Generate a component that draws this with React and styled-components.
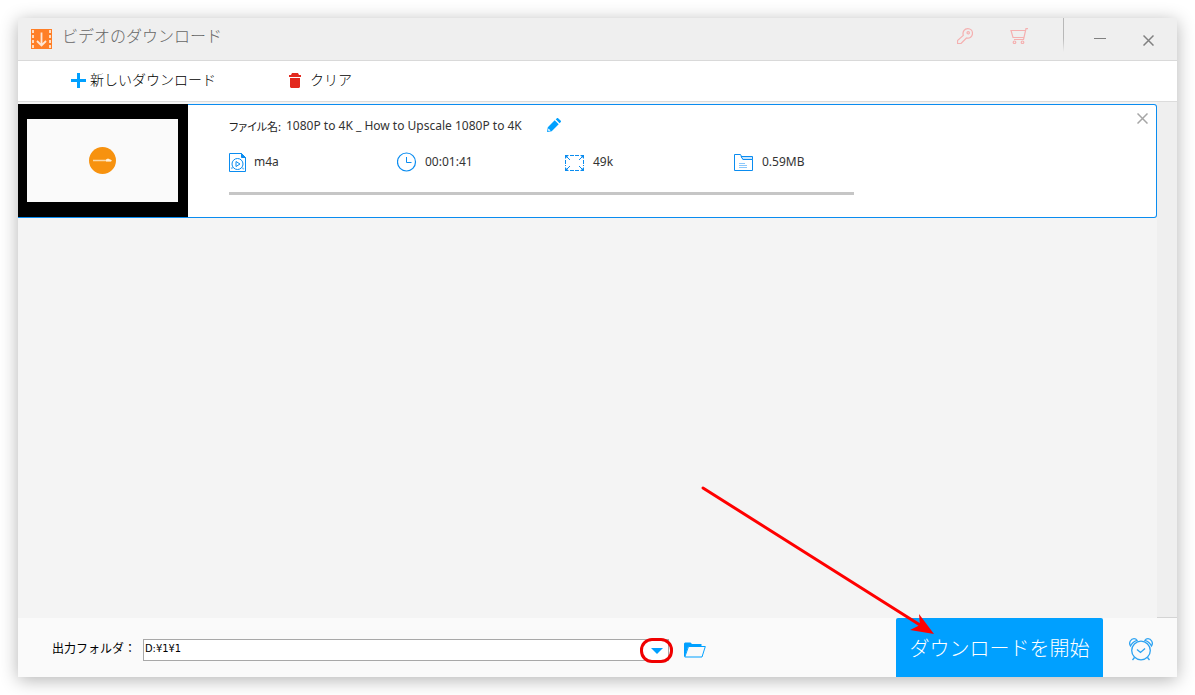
import React from "react";
import styled, { createGlobalStyle } from "styled-components";

const BLUE = "#00a0ff";
const LINE_BLUE = "#0a8cf0";

const GlobalStyle = createGlobalStyle`
  *, *::before, *::after { box-sizing: border-box; }
  body {
    margin: 0;
    background: #fff;
    color: #000;
    font-family: "Noto Sans CJK JP", sans-serif;
    font-size: 12px;
  }
  svg { display: block; flex: none; }
`;

const Page = styled.div`
  display: flex;
  min-height: 100vh;
  padding: 18px;
`;

const Window = styled.main`
  flex: 1;
  min-width: 0;
  display: flex;
  flex-direction: column;
  background: #f4f4f4;
  border-radius: 2px;
  box-shadow: 0 3px 18px rgba(0, 0, 0, 0.3);
`;

const TitleBar = styled.header`
  display: flex;
  height: 43px;
  padding: 0 17px 0 13px;
  background: #efefef;
  border-bottom: 1px solid #d9d9d9;
`;

const Brand = styled.div`
  flex: 1;
  display: flex;
  align-items: center;
  gap: 10px;
`;

const Title = styled.h1`
  margin: 0;
  padding-bottom: 8px;
  font-size: 16px;
  line-height: 20px;
  font-weight: 300;
  color: #666;
`;

const IconButton = styled.button`
  display: flex;
  align-items: center;
  justify-content: center;
  width: ${(p) => p.$width || 24}px;
  height: 24px;
  padding: 0;
  border: 0;
  background: none;
  color: ${(p) => p.$color || "#808080"};
  cursor: pointer;
`;

const HeaderTools = styled.div`
  display: flex;
  align-items: center;
  gap: 24px;
  padding: 0 29px 6px 0;
`;

const Divider = styled.div`
  width: 1px;
  height: 34px;
  margin-right: 24px;
  background: linear-gradient(#b8b8b8 60%, #efefef);
`;

const WindowControls = styled.div`
  display: flex;
  align-items: center;
  gap: 24px;
`;

const Toolbar = styled.nav`
  display: flex;
  align-items: center;
  gap: 73px;
  height: 41px;
  padding: 0 53px 2px;
  background: #fff;
  border-bottom: 1px solid #dcdcdc;
`;

const ToolButton = styled.button`
  display: flex;
  align-items: center;
  gap: ${(p) => p.$gap}px;
  padding: 0;
  border: 0;
  background: none;
  font: 300 14px/20px "Noto Sans CJK JP", sans-serif;
  color: #000;
  cursor: pointer;

  span { padding-bottom: 2px; }
`;

const ListArea = styled.section`
  flex: 1;
  padding: 2px 20px 20px 0;
  background:
    linear-gradient(#d4d4d4, #d4d4d4) right bottom / 20px 1px no-repeat,
    linear-gradient(to left, #efefef 20px, #f4f4f4 20px);
`;

const Card = styled.article`
  display: flex;
  height: 114px;
  background: #fff;
  border: 1px solid ${LINE_BLUE};
  border-left: 0;
  border-radius: 0 3px 3px 0;
`;

const Thumbnail = styled.div`
  flex: none;
  width: 170px;
  margin-top: -1px;
  padding: 15px 10px 15px 9px;
  background: #000;
`;

const Frame = styled.div`
  display: flex;
  align-items: center;
  justify-content: center;
  height: 83px;
  background: #fafafa;
`;

const Details = styled.div`
  flex: 1;
  min-width: 0;
  padding: 11px 0 0 41px;
`;

const NameRow = styled.div`
  display: flex;
  align-items: center;
  height: 20px;
`;

const FileLabel = styled.span`
  width: 57px;
  font-size: 11px;
  line-height: 20px;
  font-weight: 400;
  color: #222;
  font-feature-settings: "palt";
  white-space: nowrap;
`;

const Latin = styled.span`
  font-family: "Noto Sans", sans-serif;
  font-size: 12px;
  line-height: 20px;
  color: #333;
  white-space: nowrap;
`;

const EditButton = styled(IconButton)`
  margin: 0 0 2px 20px;
`;

const Stats = styled.ul`
  display: grid;
  grid-template-columns: repeat(4, 168px);
  margin: 15px 0 19px;
  padding: 0;
  list-style: none;
`;

const Stat = styled.li`
  display: flex;
  align-items: center;
  gap: 8px;
  height: 22px;
`;

const Progress = styled.div`
  max-width: 625px;
  height: 3px;
  background: #c6c6c6;
`;

const RemoveButton = styled(IconButton)`
  margin: 1px 2px 0 0;
`;

const Footer = styled.footer`
  display: flex;
  align-items: center;
  height: 59px;
  padding-left: 34px;
  background: #fafafa;
`;

const FolderLabel = styled.label`
  width: 91px;
  font-size: 12px;
  line-height: 20px;
  font-weight: 400;
  white-space: nowrap;
`;

const SelectWrap = styled.div`
  position: relative;
  flex: 0 1 526px;
  min-width: 120px;
  margin-top: 5px;
`;

const FolderSelect = styled.select`
  appearance: none;
  display: block;
  width: 100%;
  height: 22px;
  padding: 0 28px 3px 1px;
  border: 1px solid #a8a8a8;
  border-radius: 0;
  background: #fff;
  color: #000;
  font: 11px/16px "DejaVu Sans Condensed", "DejaVu Sans", sans-serif;
`;

const DropMark = styled.div`
  position: absolute;
  top: -1px;
  right: -4px;
  display: flex;
  align-items: center;
  justify-content: center;
  width: 33px;
  height: 25px;
  border: 3px solid #f00000;
  border-radius: 12px;
  pointer-events: none;
`;

const FolderButton = styled(IconButton)`
  margin: 4px 0 0 14px;
`;

const StartWrap = styled.div`
  position: relative;
  align-self: stretch;
  margin-left: auto;
`;

const StartButton = styled.button`
  width: 207px;
  height: 100%;
  padding: 0;
  border: 0;
  border-radius: 2px 2px 0 0;
  background: ${BLUE};
  color: #fff;
  font: 300 20px/28px "Noto Sans CJK JP", sans-serif;
  white-space: nowrap;
  cursor: pointer;
`;

const Pointer = styled.svg`
  position: absolute;
  left: -200px;
  top: -137px;
  pointer-events: none;
`;

const AlarmButton = styled(IconButton)`
  margin: 3px 24px 0 26px;
`;

const AppIcon = () => (
  <svg width="21" height="20" viewBox="0 0 21 20" aria-hidden="true">
    <path fill="#ff7f27" d="M0 0h21v20H0z" />
    <path stroke="#ffdcc0" strokeWidth="2" strokeDasharray="3 2" d="M2 1v18M19 1v18" />
    <path fill="none" stroke="#ffe6d4" strokeWidth="1.800" d="M10.500 3.500v13M6 12l4.500 4.500L15 12" />
  </svg>
);

const KeyIcon = () => (
  <svg width="16" height="16" viewBox="0 0 16 16" fill="none" stroke="currentColor" strokeWidth="1.200" aria-hidden="true">
    <path d="M.5 15.500v-3L6.300 7.400C5.200 3.700 7.500.6 10.800.6c2.700 0 4.700 2 4.700 4.700 0 3.300-3 5.400-6 4.700L4 15.500z" />
    <circle cx="11.200" cy="4.800" r="1.200" />
  </svg>
);

const CartIcon = () => (
  <svg width="18" height="16" viewBox="0 0 18 16" fill="none" stroke="currentColor" strokeWidth="1.200" aria-hidden="true">
    <path d="M18 .6h-2L14 9.500H3L1 2.500h14.400M14 9.500l-.5 2H4" />
    <circle cx="4.500" cy="14.300" r="1.300" />
    <circle cx="12.500" cy="14.300" r="1.300" />
  </svg>
);

const MinimizeIcon = () => (
  <svg width="12" height="4" viewBox="0 0 12 4" aria-hidden="true">
    <path stroke="currentColor" d="M0 1.500h12" />
  </svg>
);

const CloseIcon = ({ drop = 0 }) => (
  <svg width="11" height={11 + drop} viewBox={`0 ${-drop} 11 ${11 + drop}`} aria-hidden="true">
    <path fill="none" stroke="currentColor" strokeWidth="1.500" d="M.5.500l10 10M10.500.5l-10 10" />
  </svg>
);

const PlusIcon = () => (
  <svg width="15" height="15" viewBox="0 0 15 15" aria-hidden="true">
    <path fill={BLUE} d="M6 0h3v6h6v3H9v6H6V9H0V6h6z" />
  </svg>
);

const TrashIcon = () => (
  <svg width="12" height="15" viewBox="0 0 12 15" aria-hidden="true">
    <path fill="#e3281e" d="M3 0h6l1 2h2v2H0V2h2zM1 5h10v9l-1 1H2l-1-1z" />
  </svg>
);

const ThumbBadge = () => (
  <svg width="28" height="28" viewBox="0 0 28 28" aria-hidden="true">
    <circle cx="13.500" cy="13.500" r="13.500" fill="#f7920f" />
    <path stroke="#fbd9a8" strokeWidth="1.500" d="M4 13.500h18" />
    <path fill="#fff0d8" d="M17 12.500l2-1 4 2-1 1h-5z" />
  </svg>
);

const PencilIcon = () => (
  <svg width="14" height="14" viewBox="0 0 14 14" fill={BLUE} aria-hidden="true">
    <path d="M0 14l.8-4.700 6.900-7 4 4-7 6.900zM8.700 1.300L10 .2c.4-.3.8-.2 1.100 0l2.700 2.600c.3.400.3.800 0 1.100l-1.200 1.400z" />
    <path fill="#fff" d="M1.500 10.500l2 2-1.700.5-.8-.8z" />
  </svg>
);

const MediaIcon = () => (
  <svg width="17" height="19" viewBox="0 0 17 19" fill="none" stroke={LINE_BLUE} aria-hidden="true">
    <path d="M12.500.5H.5v18h16v-14z" />
    <path fill={LINE_BLUE} d="M12.500.5v4h4z" />
    <circle cx="8.500" cy="11" r="5.500" />
    <path d="M7 8.500v5l4-2.500z" />
    <path strokeWidth="1.500" d="M2 15.500l2-1M13 15l2 1" opacity=".5" />
  </svg>
);

const ClockIcon = () => (
  <svg width="20" height="20" viewBox="0 0 20 20" fill="none" stroke={LINE_BLUE} aria-hidden="true">
    <circle cx="9.500" cy="10" r="9" strokeWidth="1.200" />
    <path d="M9.500 5v5.500h5" />
  </svg>
);

const ResizeIcon = () => (
  <svg width="20" height="20" viewBox="0 0 20 20" fill="none" stroke={LINE_BLUE} aria-hidden="true">
    <path d="M5 3.500h10M5 18.500h10M.5 8v6M18.500 8v6" strokeDasharray="4 1" />
    <path d="M1 4l4 4M18 4l-4 4M1 18l4-4M18 18l-4-4" />
    <path fill={LINE_BLUE} stroke="none" d="M0 3h4L0 7zM19 3v4l-4-4zM0 19v-4l4 4zM19 19h-4l4-4z" />
  </svg>
);

const FileIcon = () => (
  <svg width="21" height="20" viewBox="-1 0 21 20" fill="none" stroke={LINE_BLUE} aria-hidden="true">
    <path d="M.5 18.500v-16h6L9 7.500h9.500v11z" />
    <path fill="#c9e6ff" d="M7 4.500h11.500v3H9z" />
    <path stroke="#8cc8fb" d="M5 11.500h6M5 13.500h8M5 15.500h8" />
  </svg>
);

const DropIcon = () => (
  <svg width="12" height="6" viewBox="0 0 12 6" aria-hidden="true">
    <path fill={BLUE} d="M0 0h12L6 6z" />
  </svg>
);

const OpenFolderIcon = () => (
  <svg width="22" height="16" viewBox="0 0 22 16" aria-hidden="true">
    <path fill={BLUE} d="M0 15V1.500L1 .5h5.500L8 2h9.500v3H4L1 14z" />
    <path fill="#fafafa" stroke={BLUE} d="M4.500 4.500h16.800L18 15H.8z" />
  </svg>
);

const AlarmIcon = () => (
  <svg width="24" height="23" viewBox="0 0 24 23" fill="none" stroke="#2ba2f2" strokeWidth="1.300" aria-hidden="true">
    <circle cx="12" cy="12.500" r="9.300" />
    <path d="M1.500 8C-.8 4.500 2.200.7 5 .7c1.700 0 2.500.8 3 1.600C5 3.200 2.900 5 1.500 8zM22.500 8c2.300-3.500-.7-7.300-3.500-7.300-1.700 0-2.500.8-3 1.600 3 .9 5.100 2.700 6.500 5.700zM5.500 19.500l-2 2.500M18.500 19.500l2 2.500M8 11.500l3.500 3 4.500-4" />
  </svg>
);

const STATS = [
  { label: "形式", icon: MediaIcon, value: "m4a" },
  { label: "長さ", icon: ClockIcon, value: "00:01:41" },
  { label: "品質", icon: ResizeIcon, value: "49k" },
  { label: "サイズ", icon: FileIcon, value: "0.59MB" },
];

export default function App() {
  return (
    <Page>
      <GlobalStyle />
      <Window>
        <TitleBar>
          <Brand>
            <AppIcon />
            <Title>ビデオのダウンロード</Title>
          </Brand>
          <HeaderTools>
            <IconButton $width={30} $color="#f5b0b0" aria-label="登録"><KeyIcon /></IconButton>
            <IconButton $width={30} $color="#f5b0b0" aria-label="購入"><CartIcon /></IconButton>
          </HeaderTools>
          <Divider />
          <WindowControls>
            <IconButton aria-label="最小化"><MinimizeIcon /></IconButton>
            <IconButton aria-label="閉じる"><CloseIcon drop={3} /></IconButton>
          </WindowControls>
        </TitleBar>

        <Toolbar>
          <ToolButton $gap={4}><PlusIcon /><span>新しいダウンロード</span></ToolButton>
          <ToolButton $gap={9}><TrashIcon /><span>クリア</span></ToolButton>
        </Toolbar>

        <ListArea>
          <Card>
            <Thumbnail>
              <Frame><ThumbBadge /></Frame>
            </Thumbnail>
            <Details>
              <NameRow>
                <FileLabel>ファイル名:</FileLabel>
                <Latin>1080P to 4K _ How to Upscale 1080P to 4K</Latin>
                <EditButton aria-label="名前を編集"><PencilIcon /></EditButton>
              </NameRow>
              <Stats>
                {STATS.map(({ label, icon: Icon, value }) => (
                  <Stat key={label} title={label}>
                    <Icon />
                    <Latin>{value}</Latin>
                  </Stat>
                ))}
              </Stats>
              <Progress role="progressbar" aria-valuenow={0} aria-valuemin={0} aria-valuemax={100} aria-label="進行状況" />
            </Details>
            <RemoveButton $color="#a6a6a6" aria-label="削除"><CloseIcon /></RemoveButton>
          </Card>
        </ListArea>

        <Footer>
          <FolderLabel htmlFor="folder">出力フォルダ：</FolderLabel>
          <SelectWrap>
            <FolderSelect id="folder" defaultValue="D:¥1¥1">
              <option>D:¥1¥1</option>
            </FolderSelect>
            <DropMark><DropIcon /></DropMark>
          </SelectWrap>
          <FolderButton aria-label="フォルダを開く"><OpenFolderIcon /></FolderButton>
          <StartWrap>
            <StartButton>ダウンロードを開始</StartButton>
            <Pointer width="242" height="158" viewBox="0 0 242 158" aria-hidden="true">
              <path stroke="#f00" strokeWidth="3" strokeLinecap="round" d="M7 7l217 137" />
              <path fill="#f00" d="M238 153l-24-4 10-5-1-11z" />
            </Pointer>
          </StartWrap>
          <AlarmButton aria-label="スケジュール"><AlarmIcon /></AlarmButton>
        </Footer>
      </Window>
    </Page>
  );
}
